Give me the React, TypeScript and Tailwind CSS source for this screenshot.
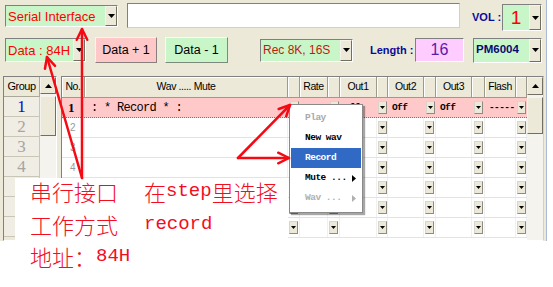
import React from "react";

type Col = { w: string; label?: string; btn?: boolean };
const cols: Col[] = [
  { w: "w-[23px]", label: "No." },
  { w: "w-[203px]", label: "Wav ..... Mute" },
  { w: "w-[12px]", btn: true },
  { w: "w-[28px]", label: "Rate" },
  { w: "w-[12px]", btn: true },
  { w: "w-[37px]", label: "Out1" },
  { w: "w-[11px]", btn: true },
  { w: "w-[36px]", label: "Out2" },
  { w: "w-[12px]", btn: true },
  { w: "w-[36px]", label: "Out3" },
  { w: "w-[13px]", btn: true },
  { w: "w-[31px]", label: "Flash" },
  { w: "w-[11px]", btn: true },
];

const row1: Record<number, string> = { 5: "Off", 7: "Off", 9: "Off", 11: "-----" };

function Down() {
  return (
    <svg width="7" height="4" viewBox="0 0 7 4">
      <path d="M0 0H7L3.5 4Z" fill="#000" />
    </svg>
  );
}

function SmallBtn() {
  return (
    <div className="w-[9px] h-[13px] bg-[#ECE9D8] border border-t-[#D8D6CB] border-l-[#D8D6CB] border-b-[#8E8C80] border-r-[#8E8C80] flex items-center justify-center">
      <svg width="5" height="3" viewBox="0 0 5 3">
        <path d="M0 0H5L2.5 3Z" fill="#000" />
      </svg>
    </div>
  );
}

function Combo({ cls, bg, children }: { cls: string; bg: string; children: React.ReactNode }) {
  return (
    <div className={`flex border border-t-[#808080] border-l-[#808080] border-b-white border-r-white ${cls}`}>
      <div className={`flex-1 flex items-center ${bg}`}>{children}</div>
      <div className="w-[12px] flex items-center justify-center bg-[#ECE9D8] border border-t-[#F4F3EE] border-l-[#F4F3EE] border-b-[#716F64] border-r-[#716F64]">
        <Down />
      </div>
    </div>
  );
}

function Arrow({ x1, y1, x2, y2, len = 12, ang = 26 }: { x1: number; y1: number; x2: number; y2: number; len?: number; ang?: number }) {
  const a = Math.atan2(y2 - y1, x2 - x1);
  const r = (ang * Math.PI) / 180;
  const p1 = `${x2 - len * Math.cos(a - r)},${y2 - len * Math.sin(a - r)}`;
  const p2 = `${x2 - len * Math.cos(a + r)},${y2 - len * Math.sin(a + r)}`;
  return (
    <g stroke="#F50A14" strokeWidth={2.5} strokeLinecap="round" strokeLinejoin="round" fill="none">
      <line x1={x1} y1={y1} x2={x2} y2={y2} />
      <polyline points={`${p1} ${x2},${y2} ${p2}`} />
    </g>
  );
}

const raised = "bg-[#ECE9D8] border border-t-[#F4F3EE] border-l-[#F4F3EE] border-b-[#716F64] border-r-[#716F64]";

export default function App() {
  return (
    <div className="relative w-[553px] h-[287px] bg-white overflow-hidden font-['Liberation_Sans',Arial,sans-serif]">
      <div className="w-[547px] h-[241px] bg-[#ECE9D8] border-r border-[#A9B9D6] flex flex-col">
        {/* Row 1 */}
        <div className="flex items-start h-[36px]">
          <Combo cls="ml-[5px] mt-[5px] w-[113px] h-[22px]" bg="bg-[#C8F6C8]">
            <span className="pl-[2px] text-[13px] text-[#FF0000] leading-none">Serial Interface</span>
          </Combo>
          <div className="ml-[9px] mt-[3px] w-[333px] h-[25px] bg-white border border-t-[#808080] border-l-[#808080] border-b-[#D4D0C8] border-r-[#D4D0C8]" />
          <span className="ml-[12px] mt-[12px] w-[30px] text-[11px] font-bold text-[#0A0A9A] leading-none">VOL :</span>
          <Combo cls="mt-[4px] w-[40px] h-[27px]" bg="bg-[#C8F6C8] justify-center">
            <span className="text-[19px] text-[#FF0000] leading-none">1</span>
          </Combo>
        </div>
        {/* Row 2 */}
        <div className="flex items-center h-[28px]">
          <Combo cls="ml-[5px] w-[81px] h-[24px]" bg="bg-[#C8F6C8]">
            <span className="pl-[2px] text-[13px] text-[#FF0000] leading-none">Data : 84H</span>
          </Combo>
          <div className="ml-[9px] w-[62px] h-[26px] bg-[#FFC8C8] border border-t-[#FFF0F0] border-l-[#FFF0F0] border-b-[#8A7F7F] border-r-[#8A7F7F] flex items-center justify-center text-[12.5px] text-black">
            Data + 1
          </div>
          <div className="ml-[8px] w-[63px] h-[26px] bg-[#C8F6C8] border border-t-[#F0FFF0] border-l-[#F0FFF0] border-b-[#7F8A7F] border-r-[#7F8A7F] flex items-center justify-center text-[12.5px] text-black">
            Data - 1
          </div>
          <Combo cls="ml-[32px] w-[93px] h-[23px]" bg="bg-[#C8F6C8]">
            <span className="pl-[2px] text-[12px] text-[#C01A10] leading-none">Rec 8K, 16S</span>
          </Combo>
          <span className="ml-[17px] w-[45px] text-[11px] font-bold text-[#0A0A9A] leading-none">Length :</span>
          <div className="w-[49px] h-[24px] bg-[#FFCCFF] border border-t-[#808080] border-l-[#808080] border-b-white border-r-white flex items-center justify-center text-[16px] text-[#5A1AA8] leading-none">
            16
          </div>
          <Combo cls="ml-[9px] w-[69px] h-[25px]" bg="bg-[#C8F6C8]">
            <span className="pl-[2px] text-[11.5px] font-bold text-[#0A0A70] leading-none">PM6004</span>
          </Combo>
        </div>
        {/* Main area */}
        <div className="flex mt-[12px] h-[165px]">
          {/* Group panel */}
          <div className="ml-[3px] w-[54px] h-full flex border border-t-[#808080] border-l-[#808080] border-b-white border-r-white">
            <div className="w-[36px] flex flex-col">
              <div className="h-[20px] bg-[#ECE9D8] border-b border-r border-[#ACA899] flex items-center justify-center text-[11px] text-black tracking-[-0.5px]">
                Group
              </div>
              {["1", "2", "3", "4", "", "", ""].map((n, i) => (
                <div
                  key={i}
                  className={`h-[20px] bg-[#EFEDE4] border-b border-r border-[#C9C6B7] flex items-center justify-center text-[17px] leading-none font-['Liberation_Serif',serif] ${i === 0 ? "text-[#0A0ACC]" : "text-[#A5A5A5]"}`}
                >
                  {n}
                </div>
              ))}
            </div>
            <div className="w-[16px] flex flex-col bg-[#F4F3EE]">
              <div className={`h-[17px] ${raised} flex items-center justify-center`}>
                <svg width="7" height="4" viewBox="0 0 7 4">
                  <path d="M0 4H7L3.5 0Z" fill="#000" />
                </svg>
              </div>
              <div className={`mt-[2px] h-[40px] ${raised}`} />
            </div>
          </div>
          {/* Grid */}
          <div className="ml-[4px] w-[483px] h-full flex border border-t-[#808080] border-l-[#808080] border-b-white border-r-[#D4D0C8]">
            <div className="w-[465px] flex flex-col bg-white">
              <div className="flex h-[21px]">
                {cols.map((c, i) => (
                  <div
                    key={i}
                    className={`${c.w} h-full bg-[#ECE9D8] border-r border-b border-[#9D9A8C] shadow-[inset_1px_1px_0_#FFFFFF] flex items-center justify-center text-[10.5px] text-black tracking-[-0.4px] whitespace-nowrap`}
                  >
                    {c.label ?? ""}
                  </div>
                ))}
              </div>
              {[1, 2, 3, 4, 5, 6, 7].map((r) => (
                <div
                  key={r}
                  className={`flex h-[20px] ${r === 1 ? "bg-[#FFC9C9] border-b border-dotted border-[#777]" : "border-b border-[#E3E3E3]"}`}
                >
                  {cols.map((c, i) => (
                    <div
                      key={i}
                      className={`${c.w} h-full flex items-center ${c.btn ? "justify-center" : ""} ${r === 1 ? "" : "border-r border-[#F0F0F0]"} overflow-hidden whitespace-nowrap`}
                    >
                      {c.btn ? (
                        <SmallBtn />
                      ) : i === 0 ? (
                        r === 1 ? (
                          <span className="pl-[6px] text-[13px] font-bold text-black font-['Liberation_Serif',serif] leading-none">1</span>
                        ) : r <= 4 ? (
                          <span className="pl-[8px] text-[10px] text-[#9A9A9A] leading-none">{r}</span>
                        ) : null
                      ) : i === 1 && r === 1 ? (
                        <span className="pl-[6px] text-[12px] tracking-[-0.7px] text-black font-['Liberation_Mono',monospace] leading-none">
                          : * Record * :
                        </span>
                      ) : r === 1 && row1[i] ? (
                        <span className="pl-[4px] text-[9.5px] font-bold tracking-[-0.6px] text-black font-['Liberation_Mono',monospace] leading-none">
                          {row1[i]}
                        </span>
                      ) : null}
                    </div>
                  ))}
                </div>
              ))}
            </div>
            <div className="w-[16px] flex flex-col bg-[#F4F3EE]">
              <div className={`h-[18px] ${raised} flex items-center justify-center`}>
                <svg width="7" height="4" viewBox="0 0 7 4">
                  <path d="M0 4H7L3.5 0Z" fill="#000" />
                </svg>
              </div>
              <div className={`mt-[2px] h-[37px] ${raised}`} />
            </div>
          </div>
        </div>
      </div>

      {/* Context menu */}
      <div className="absolute left-[289px] top-[104px] w-[74px] h-[109px] bg-white border border-[#8A8A8A] shadow-[2px_2px_1px_rgba(0,0,0,0.35)] py-[3px] px-[1px] flex flex-col font-['Liberation_Mono',monospace] text-[9.5px] font-bold tracking-[-0.5px]">
        <div className="h-[20px] flex items-center pl-[14px] text-[#A9A9A9]">Play</div>
        <div className="h-[20px] flex items-center pl-[14px] text-black">New wav</div>
        <div className="h-[20px] flex items-center pl-[14px] text-white bg-[#316AC5]">Record</div>
        <div className="h-[20px] flex items-center pl-[14px] pr-[5px] justify-between text-black">
          <span>Mute ...</span>
          <svg width="4" height="7" viewBox="0 0 4 7">
            <path d="M0 0L4 3.5L0 7Z" fill="#000" />
          </svg>
        </div>
        <div className="h-[20px] flex items-center pl-[14px] pr-[5px] justify-between text-[#B0B0B0]">
          <span>Wav ...</span>
          <svg width="4" height="7" viewBox="0 0 4 7">
            <path d="M0 0L4 3.5L0 7Z" fill="#B0B0B0" />
          </svg>
        </div>
      </div>

      {/* Annotation box */}
      <div className="absolute left-[15px] top-[178px] w-[273px] h-[109px] bg-white">
        <div className="mt-[-4px] pl-[15px] text-[22px] leading-[33px] text-[#F20D1F] font-light font-['Noto_Sans_CJK_SC',sans-serif] whitespace-nowrap">
          <div className="h-[34px] flex items-center">
            <span>串行接口</span>
            <span className="inline-block w-[26px]"></span>
            <span>在</span>
            <span className="font-['Liberation_Mono',monospace] text-[19px] font-normal leading-none">step</span>
            <span>里选择</span>
          </div>
          <div className="h-[33px] flex items-center">
            <span>工作方式</span>
            <span className="inline-block w-[26px]"></span>
            <span className="font-['Liberation_Mono',monospace] text-[19px] font-normal leading-none">record</span>
          </div>
          <div className="h-[31px] flex items-center">
            <span>地址：</span>
            <span className="font-['Liberation_Mono',monospace] text-[19px] font-normal leading-none">84H</span>
          </div>
        </div>
      </div>

      {/* Red arrows */}
      <svg className="absolute left-0 top-0 pointer-events-none" width="553" height="287" viewBox="0 0 553 287">
        <Arrow x1={82} y1={178} x2={82} y2={29} />
        <Arrow x1={82} y1={178} x2={47} y2={57} />
        <Arrow x1={238} y1={158} x2={290} y2={105} />
        <Arrow x1={238} y1={158} x2={289} y2={158} />
      </svg>
    </div>
  );
}
